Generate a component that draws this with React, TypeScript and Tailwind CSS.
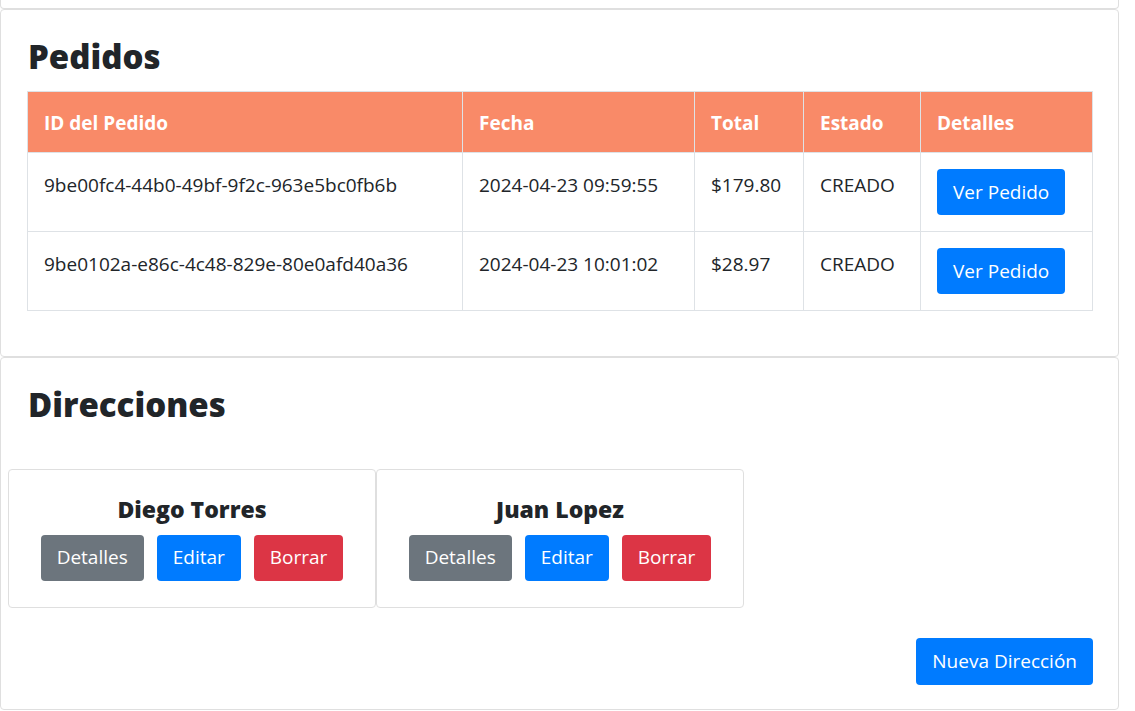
const pedidos = [
  { id: '9be00fc4-44b0-49bf-9f2c-963e5bc0fb6b', fecha: '2024-04-23 09:59:55', total: '$179.80', estado: 'CREADO' },
  { id: '9be0102a-e86c-4c48-829e-80e0afd40a36', fecha: '2024-04-23 10:01:02', total: '$28.97', estado: 'CREADO' },
];

const direcciones = ['Diego Torres', 'Juan Lopez'];

export default function App() {
  return (
    <div className="w-[1119px] bg-white font-['Open_Sans',sans-serif] text-[19px] text-[#212529]">
      {/* previous card (cut off) */}
      <div className="h-[9px] rounded-b border border-t-0 border-[#dfdfdf]" />

      {/* Pedidos */}
      <div className="rounded border border-[#dfdfdf] pt-[26px] pb-[45px] pl-[26px] pr-[25px]">
        <h2 className="ml-[1px] mb-[14px] h-[41px] text-[33px] leading-[41px] font-extrabold">Pedidos</h2>
        <table className="w-full border-collapse">
          <thead>
            <tr className="bg-[#f98a68] text-white font-bold">
              <th className="w-[435px] border border-[#dee2e6] px-4 pt-[3px] h-[61px] text-left">ID del Pedido</th>
              <th className="w-[232px] border border-[#dee2e6] px-4 pt-[3px] text-left">Fecha</th>
              <th className="w-[109px] border border-[#dee2e6] px-4 pt-[3px] text-left">Total</th>
              <th className="w-[117px] border border-[#dee2e6] px-4 pt-[3px] text-left">Estado</th>
              <th className="border border-[#dee2e6] px-4 pt-[3px] text-left">Detalles</th>
            </tr>
          </thead>
          <tbody>
            {pedidos.map((p) => (
              <tr key={p.id}>
                <td className="border border-[#dee2e6] px-4 pt-[18px] align-top">{p.id}</td>
                <td className="border border-[#dee2e6] px-4 pt-[18px] align-top">{p.fecha}</td>
                <td className="border border-[#dee2e6] px-4 pt-[18px] align-top">{p.total}</td>
                <td className="border border-[#dee2e6] px-4 pt-[18px] align-top">{p.estado}</td>
                <td className="border border-[#dee2e6] px-4 py-4 align-top">
                  <button className="h-[46px] rounded bg-[#007bff] px-4 text-[19px] text-white">Ver Pedido</button>
                </td>
              </tr>
            ))}
          </tbody>
        </table>
      </div>

      {/* Direcciones */}
      <div className="rounded border border-[#dfdfdf] pt-[26px] pb-[24px]">
        <h2 className="ml-[27px] h-[41px] text-[33px] leading-[41px] font-extrabold">Direcciones</h2>
        <div className="mt-[44px] flex pl-[7px]">
          {direcciones.map((n) => (
            <div key={n} className="flex w-[368px] flex-col items-center rounded border border-[#dfdfdf] pt-[26px] pb-[26px]">
              <h5 className="text-[23px] leading-[1.2] font-extrabold">{n}</h5>
              <div className="mt-[11px] flex gap-[13px]">
                <button className="h-[46px] rounded bg-[#6c757d] px-4 text-[19px] text-white">Detalles</button>
                <button className="h-[46px] rounded bg-[#007bff] px-4 text-[19px] text-white">Editar</button>
                <button className="h-[46px] rounded bg-[#dc3545] px-4 text-[19px] text-white">Borrar</button>
              </div>
            </div>
          ))}
        </div>
        <div className="mt-[30px] flex justify-end pr-[25px]">
          <button className="h-[47px] rounded bg-[#007bff] px-4 text-[19px] text-white">Nueva Dirección</button>
        </div>
      </div>
    </div>
  );
}
